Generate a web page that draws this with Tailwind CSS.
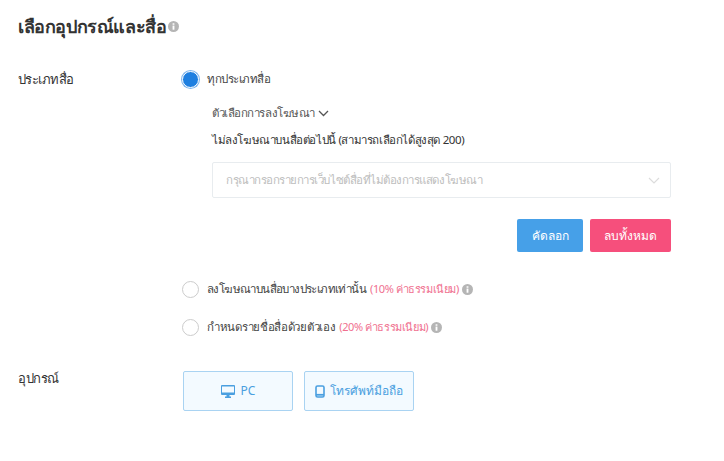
<!DOCTYPE html>
<html lang="th">
<head>
  <meta charset="UTF-8" />
  <title>เลือกอุปกรณ์และสื่อ</title>
  <script src="https://cdn.jsdelivr.net/npm/@tailwindcss/browser@4"></script>
</head>
<body class="bg-white text-[#333] font-['Noto_Sans',sans-serif]">
  <div class="w-[724px] h-[461px] overflow-hidden pl-[18px] pt-[12px]">

    <!-- Title -->
    <div class="flex items-center h-[28px]">
      <h1 class="text-[18px] font-semibold leading-[28px] tracking-[-0.4px] text-[#333]">เลือกอุปกรณ์และสื่อ</h1>
      <svg class="w-[11px] h-[11px] ml-[2px]" viewBox="0 0 12 12"><circle cx="6" cy="6" r="6" fill="#b5b5b5"/><rect x="5" y="5" width="2" height="4.5" fill="#fff"/><rect x="5" y="2.5" width="2" height="1.6" fill="#fff"/></svg>
    </div>

    <!-- Media type -->
    <div class="flex mt-[26px]">
      <div class="w-[164px] text-[13px] leading-[26px] tracking-[-0.55px]">ประเภทสื่อ</div>
      <div class="w-[489px]">
        <div class="flex items-center h-[26px]">
          <span class="w-[17px] h-[17px] rounded-full bg-[#1e7fe0] ring-1 ring-[#7fb6ee] border border-white"></span>
          <span class="ml-[8px] text-[11.5px] tracking-[-0.5px] text-[#444]">ทุกประเภทสื่อ</span>
        </div>

        <div class="pl-[30px]">
          <div class="flex items-center mt-[11px] h-[20px] text-[11.5px] tracking-[-0.45px] text-[#555]">
            ตัวเลือกการลงโฆษณา
            <svg class="w-[11px] h-[7px] ml-[3px]" viewBox="0 0 11 7" fill="none" stroke="#555" stroke-width="1.3"><path d="M1 1l4.5 4.5L10 1"/></svg>
          </div>
          <div class="mt-[7px] h-[20px] leading-[20px] text-[11.5px] tracking-[-0.4px] text-[#333]">ไม่ลงโฆษณาบนสื่อต่อไปนี้ (สามารถเลือกได้สูงสุด 200)</div>

          <div class="flex items-center justify-between mt-[12px] h-[36px] border border-[#e8ecef] rounded-[2px] pl-[13px] pr-[10px] text-[11.5px] tracking-[-0.47px] text-[#bdbdbd]">
            กรุณากรอกรายการเว็บไซต์สื่อที่ไม่ต้องการแสดงโฆษณา
            <svg class="w-[12px] h-[7px]" viewBox="0 0 12 7" fill="none" stroke="#dcdcdc" stroke-width="1.2"><path d="M1 1l5 5 5-5"/></svg>
          </div>

          <div class="flex justify-end gap-[7px] mt-[21px]">
            <button class="w-[66px] h-[33px] rounded-[2px] bg-[#46a0e8] text-white text-[12px] font-medium">คัดลอก</button>
            <button class="w-[81px] h-[33px] rounded-[2px] bg-[#f64f7c] text-white text-[12px] font-medium">ลบทั้งหมด</button>
          </div>
        </div>

        <div class="flex items-center h-[20px] mt-[27px] text-[11.5px] tracking-[-0.6px] text-[#444]">
          <span class="w-[17px] h-[17px] rounded-full border border-[#ccc]"></span>
          <span class="ml-[8px]">ลงโฆษณาบนสื่อบางประเภทเท่านั้น</span>
          <span class="ml-[4px] text-[#f0708f] text-[11px] tracking-[-0.4px]">(10% ค่าธรรมเนียม)</span>
          <svg class="w-[11px] h-[11px] ml-[3px]" viewBox="0 0 12 12"><circle cx="6" cy="6" r="6" fill="#b5b5b5"/><rect x="5" y="5" width="2" height="4.5" fill="#fff"/><rect x="5" y="2.5" width="2" height="1.6" fill="#fff"/></svg>
        </div>

        <div class="flex items-center h-[20px] mt-[18px] text-[11.5px] tracking-[-0.3px] text-[#444]">
          <span class="w-[17px] h-[17px] rounded-full border border-[#ccc]"></span>
          <span class="ml-[8px]">กำหนดรายชื่อสื่อด้วยตัวเอง</span>
          <span class="ml-[4px] text-[#f0708f] text-[11px] tracking-[-0.4px]">(20% ค่าธรรมเนียม)</span>
          <svg class="w-[11px] h-[11px] ml-[3px]" viewBox="0 0 12 12"><circle cx="6" cy="6" r="6" fill="#b5b5b5"/><rect x="5" y="5" width="2" height="4.5" fill="#fff"/><rect x="5" y="2.5" width="2" height="1.6" fill="#fff"/></svg>
        </div>
      </div>
    </div>

    <!-- Device -->
    <div class="flex mt-[34px]">
      <div class="w-[165px] text-[13px] leading-[26px] tracking-[-0.5px] -mt-[6px]">อุปกรณ์</div>
      <div class="flex gap-[11px]">
        <button class="flex items-center justify-center gap-[6px] w-[110px] h-[40px] border border-[#a9d3f2] bg-[#f3faff] rounded-[2px] text-[12px] text-[#4a9fe0]">
          <svg class="w-[14px] h-[13px]" viewBox="0 0 14 13" fill="#4a9fe0"><path d="M1 0h12a1 1 0 0 1 1 1v8a1 1 0 0 1-1 1H8.5v1.5H10V13H4v-1.5h1.500V10H1a1 1 0 0 1-1-1V1a1 1 0 0 1 1-1zm0 1.500V7.500h12V1.500z"/></svg>
          PC
        </button>
        <button class="flex items-center justify-center gap-[5px] w-[110px] h-[40px] border border-[#a9d3f2] bg-[#f3faff] rounded-[2px] text-[12px] text-[#4a9fe0]">
          <svg class="w-[10px] h-[13px]" viewBox="0 0 10 13" fill="none" stroke="#4a9fe0" stroke-width="1.600"><rect x="1" y="1" width="8" height="11" rx="1.500"/><path d="M1 9.800h8" stroke-width="1.800"/></svg>
          โทรศัพท์มือถือ
        </button>
      </div>
    </div>
  </div>
</body>
</html>
